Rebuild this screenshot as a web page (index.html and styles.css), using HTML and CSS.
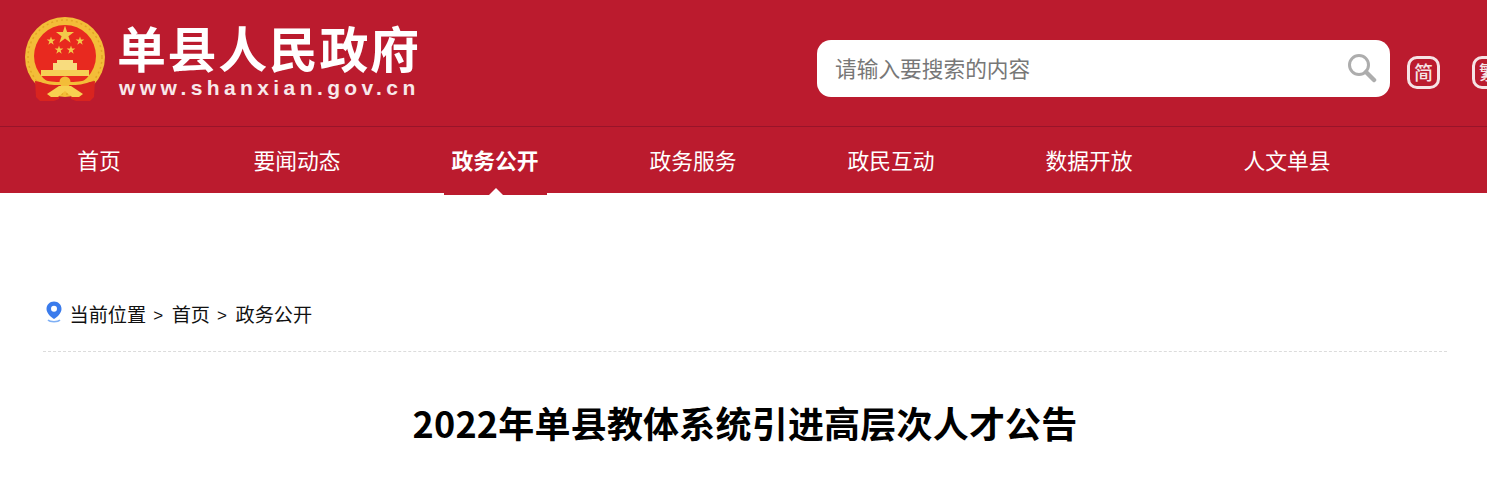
FILE: index.html
```html
<!DOCTYPE html>
<html lang="zh-CN">
<head>
  <meta charset="UTF-8" />
  <title>2022年单县教体系统引进高层次人才公告</title>
  <link rel="stylesheet" href="styles.css">
</head>
<body>
  <header class="site-header">
    <div class="logo">
      <svg class="emblem" width="84" height="88" viewBox="0 0 84 88">
        <defs>
          <polygon id="star" points="0,-1 .22,-.31 .95,-.31 .36,.12 .59,.81 0,.38 -.59,.81 -.36,.12 -.95,-.31 -.22,-.31"/>
        </defs>
        <!-- ring and disc -->
        <circle cx="41" cy="42" r="40" fill="#f3bd38"/>
        <circle cx="41" cy="42" r="37" fill="none" stroke="#e3a526" stroke-width="1.5" stroke-dasharray="2 3"/>
        <circle cx="41" cy="41" r="31" fill="#e8291f"/>
        <!-- stars -->
        <g fill="#f2c94a">
          <use href="#star" transform="translate(41 20) scale(9.5)"/>
          <use href="#star" transform="translate(27 26) scale(4.6)"/>
          <use href="#star" transform="translate(56 26) scale(4.6)"/>
          <use href="#star" transform="translate(35 35) scale(4.6)"/>
          <use href="#star" transform="translate(47 35) scale(4.6)"/>
        </g>
        <!-- gate -->
        <path d="M33 45 H49 V48 H53 V55 H29 V48 H33 Z" fill="#f8dc7e"/>
        <path d="M17 55 H65 V61 H17 Z" fill="#f6cf55"/>
        <!-- ribbon -->
        <path d="M11 66 C20 67 30 69 36 70 L35 84 L30 86 H16 L12 82 Z" fill="#d9241f"/>
        <path d="M71 66 C62 67 52 69 46 70 L47 84 L52 86 H66 L70 82 Z" fill="#d9241f"/>
        <path d="M13 63 C24 67 32 67 37 67 H45 C50 67 58 67 69 63 L70 65 C60 70 52 70 48 70 H34 C30 70 22 70 12 65 Z" fill="#f3bd38"/>
        <!-- rosette and tails -->
        <circle cx="41" cy="67" r="5.5" fill="#f3bd38"/>
        <path d="M35 71 H47 L59 79 L55 82 H48 L41 76 L34 82 H27 L23 79 Z" fill="#f7d050"/>
      </svg>
      <div class="logo-text">
        <div class="logo-name">单县人民政府</div>
        <div class="logo-url">www.shanxian.gov.cn</div>
      </div>
    </div>
    <div class="tools">
      <form class="search">
        <input type="text" placeholder="请输入要搜索的内容" />
        <svg class="search-icon" width="30" height="30" viewBox="0 0 30 30">
          <circle cx="12" cy="12" r="9.5" fill="none" stroke="#adadad" stroke-width="3"/>
          <path d="M19 19 L27 27" stroke="#adadad" stroke-width="4.5" stroke-linecap="round"/>
        </svg>
      </form>
      <a class="lang" href="#">简</a>
      <a class="lang" href="#">繁</a>
    </div>
  </header>

  <nav class="main-nav">
    <a href="#">首页</a>
    <a href="#">要闻动态</a>
    <a href="#" class="active">政务公开</a>
    <a href="#">政务服务</a>
    <a href="#">政民互动</a>
    <a href="#">数据开放</a>
    <a href="#">人文单县</a>
  </nav>

  <main class="content">
    <div class="crumbs">
      <svg class="pin" width="18" height="22" viewBox="0 0 18 22">
        <path d="M9 0.5 C4.6 0.5 1.5 3.8 1.5 8 C1.5 12.3 6 16.2 9 18 C12 16.2 16.5 12.3 16.5 8 C16.5 3.8 13.4 0.5 9 0.5 Z" fill="#3a7bec"/>
        <circle cx="9" cy="7.7" r="3" fill="#fff"/>
        <path d="M3 19 C5 21.3 13 21.3 15 19" fill="none" stroke="#7fb0f5" stroke-width="1.5"/>
      </svg>
      <a href="#">当前位置</a>
      <span class="sep">&gt;</span>
      <a href="#">首页</a>
      <span class="sep">&gt;</span>
      <a href="#">政务公开</a>
    </div>
    <h1>2022年单县教体系统引进高层次人才公告</h1>
  </main>
</body>
</html>
```

FILE: styles.css
```css
* {
  box-sizing: border-box;
  margin: 0;
  padding: 0;
}

html, body {
  height: 100%;
  overflow: hidden;
}

body {
  font-family: "Noto Sans CJK SC", "Liberation Sans", sans-serif;
  background: #fff;
  color: #000;
}

a {
  color: inherit;
  text-decoration: none;
}

.site-header {
  height: 127px;
  background: #bb1b2e;
  border-bottom: 1px solid #98142a;
  display: flex;
  justify-content: space-between;
  padding: 15px 0 0 24px;
}

.logo {
  display: flex;
  align-items: flex-start;
  gap: 9px;
}

.emblem {
  flex: none;
}

.logo-name {
  font-size: 49px;
  font-weight: 700;
  line-height: 58px;
  letter-spacing: 1.6px;
  padding-top: 3px;
  color: #fff;
  white-space: nowrap;
}

.logo-url {
  font-family: "Liberation Sans", sans-serif;
  font-size: 21px;
  font-weight: 700;
  line-height: 24px;
  letter-spacing: 4.4px;
  color: #f8e8ea;
  white-space: nowrap;
  margin: 0 0 0 2px;
}

.tools {
  display: flex;
  align-items: flex-start;
  padding-top: 25px;
  width: 670px;
  flex: none;
}

.search {
  width: 573px;
  height: 57px;
  background: #fff;
  border-radius: 14px;
  display: flex;
  align-items: center;
  padding: 0 13px 0 18px;
  flex: none;
}

.search input {
  flex: 1;
  min-width: 0;
  border: none;
  outline: none;
  background: none;
  font-family: inherit;
  font-size: 21.7px;
  padding-bottom: 2px;
  color: #777;
}

.search input::placeholder {
  color: #777;
  opacity: 1;
}

.search-icon {
  flex: none;
  margin-top: -1px;
}

.lang {
  width: 33px;
  height: 33px;
  margin: 16px 0 0 17px;
  border: 3px solid #f6e3e5;
  border-radius: 10px;
  color: #f6e3e5;
  font-size: 19px;
  font-weight: 500;
  line-height: 25px;
  text-align: center;
  flex: none;
}

.lang + .lang {
  margin-left: 32px;
}

.main-nav {
  height: 66px;
  background: #bb1b2e;
  display: flex;
}

.main-nav a {
  width: 198px;
  height: 66px;
  line-height: 66px;
  font-size: 21.8px;
  color: #fff;
  text-align: center;
  position: relative;
  flex: none;
}

.main-nav a.active {
  font-weight: 700;
}

.main-nav a.active::before {
  content: "";
  position: absolute;
  left: 48px;
  width: 103px;
  top: 66px;
  height: 2px;
  background: #bb1b2e;
}

.main-nav a.active::after {
  content: "";
  position: absolute;
  left: 93px;
  top: 61px;
  border-left: 7px solid transparent;
  border-right: 7px solid transparent;
  border-bottom: 7px solid #fff;
}

.content {
  padding: 107px 40px 0 43px;
}

.crumbs {
  height: 52px;
  border-bottom: 1px dashed #dcdcdc;
  display: flex;
  align-items: flex-start;
  font-size: 19.2px;
  line-height: 29px;
  color: #111;
}

.pin {
  margin: 1px 7px 0 1.5px;
  flex: none;
}

.sep {
  font-family: "Liberation Sans", sans-serif;
  font-size: 17px;
  margin: 1px 8.5px 0 7px;
}

h1 {
  font-size: 36px;
  font-weight: 700;
  line-height: 50px;
  letter-spacing: .2px;
  text-align: center;
  margin-top: 45px;
  color: #000;
}
```
